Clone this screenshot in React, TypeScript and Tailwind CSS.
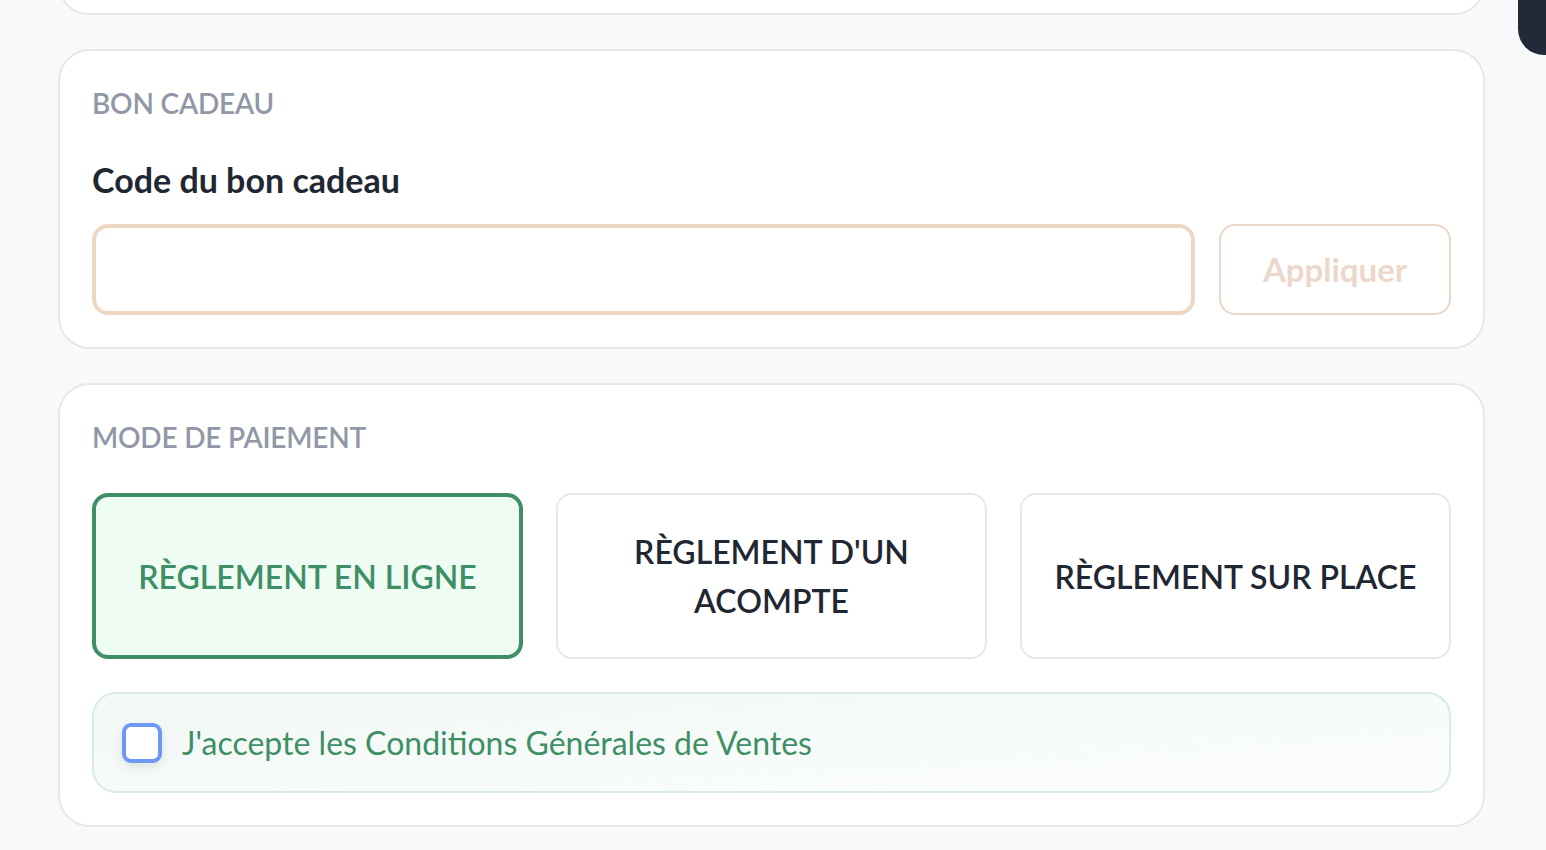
import React, { useState } from 'react';

type PaymentMode = 'online' | 'deposit' | 'onsite';

const modes: { id: PaymentMode; label: string }[] = [
  { id: 'online', label: "Règlement en ligne" },
  { id: 'deposit', label: "Règlement d'un acompte" },
  { id: 'onsite', label: 'Règlement sur place' },
];

const App: React.FC = () => {
  const [mode, setMode] = useState<PaymentMode>('online');
  const [code, setCode] = useState('');
  const [accepted, setAccepted] = useState(false);

  return (
    <div
      className="relative min-h-screen w-full overflow-hidden bg-[#f8f9fb] pl-[58px] pr-[61px]"
      style={{ fontFamily: 'Lato, "Noto Sans", sans-serif' }}
    >
      <div className="absolute right-0 top-0 h-[55px] w-[28px] rounded-bl-[26px] bg-[#222a38]" />

      <div className="flex flex-col gap-[34px]">
        {/* previous card, cut off at the top */}
        <div className="-mt-[46px] h-[61px] rounded-[32px] border-2 border-[#e6e8ec] bg-white" />

        <section className="rounded-[32px] border-2 border-[#e6e8ec] bg-white px-8 pb-8 pt-8">
          <h2 className="text-[28px] font-semibold uppercase leading-[40px] tracking-[-0.2px] text-[#9197a7]">
            Bon cadeau
          </h2>
          <label className="mt-[35px] block text-[34px] font-bold leading-[44px] text-[#1f2733]">
            Code du bon cadeau
          </label>
          <div className="mt-[22px] flex gap-6">
            <input
              value={code}
              onChange={(e) => setCode(e.target.value)}
              className="h-[91px] flex-1 rounded-[16px] border-[4px] border-[#eed7c0] bg-white px-6 text-[32px] outline-none"
            />
            <button className="h-[91px] w-[232px] rounded-[16px] border-2 border-[#ecd6c8] bg-white text-[33px] font-bold text-[#ecd7ca]">
              Appliquer
            </button>
          </div>
        </section>

        <section className="mb-[22px] rounded-[32px] border-2 border-[#e6e8ec] bg-white px-8 pb-8 pt-8">
          <h2 className="text-[28px] font-semibold uppercase leading-[40px] tracking-[-0.2px] text-[#9197a7]">
            Mode de paiement
          </h2>
          <div className="mt-[36px] grid grid-cols-3 gap-[33px]">
            {modes.map((m) => {
              const active = m.id === mode;
              return (
                <button
                  key={m.id}
                  onClick={() => setMode(m.id)}
                  className={
                    active
                      ? 'flex h-[166px] items-center justify-center rounded-[16px] border-[4px] border-[#3f8f66] bg-[#effcf3] px-[30px] text-center text-[32px] font-semibold uppercase leading-[49px] text-[#3f8f66]'
                      : 'flex h-[166px] items-center justify-center rounded-[16px] border-2 border-[#e6e8ec] bg-white px-[30px] text-center text-[32px] font-semibold uppercase leading-[49px] text-[#1f2733]'
                  }
                >
                  {m.label}
                </button>
              );
            })}
          </div>
          <label className="mt-[33px] flex h-[101px] cursor-pointer items-center gap-5 rounded-[24px] border-2 border-[#d8ece3] bg-gradient-to-br from-[#f1f8f5] to-[#fbfdfc] px-[28px]">
            <span
              onClick={() => setAccepted(!accepted)}
              className="h-[40px] w-[40px] shrink-0 rounded-[9px] border-[4px] border-[#6e98f5] bg-white shadow-[0_4px_10px_rgba(40,80,60,0.12)]"
            />
            <span className="text-[32px] leading-[44px] text-[#3f8f66]">
              J'accepte les Conditions Générales de Ventes
            </span>
          </label>
        </section>
      </div>
    </div>
  );
};

export default App;
